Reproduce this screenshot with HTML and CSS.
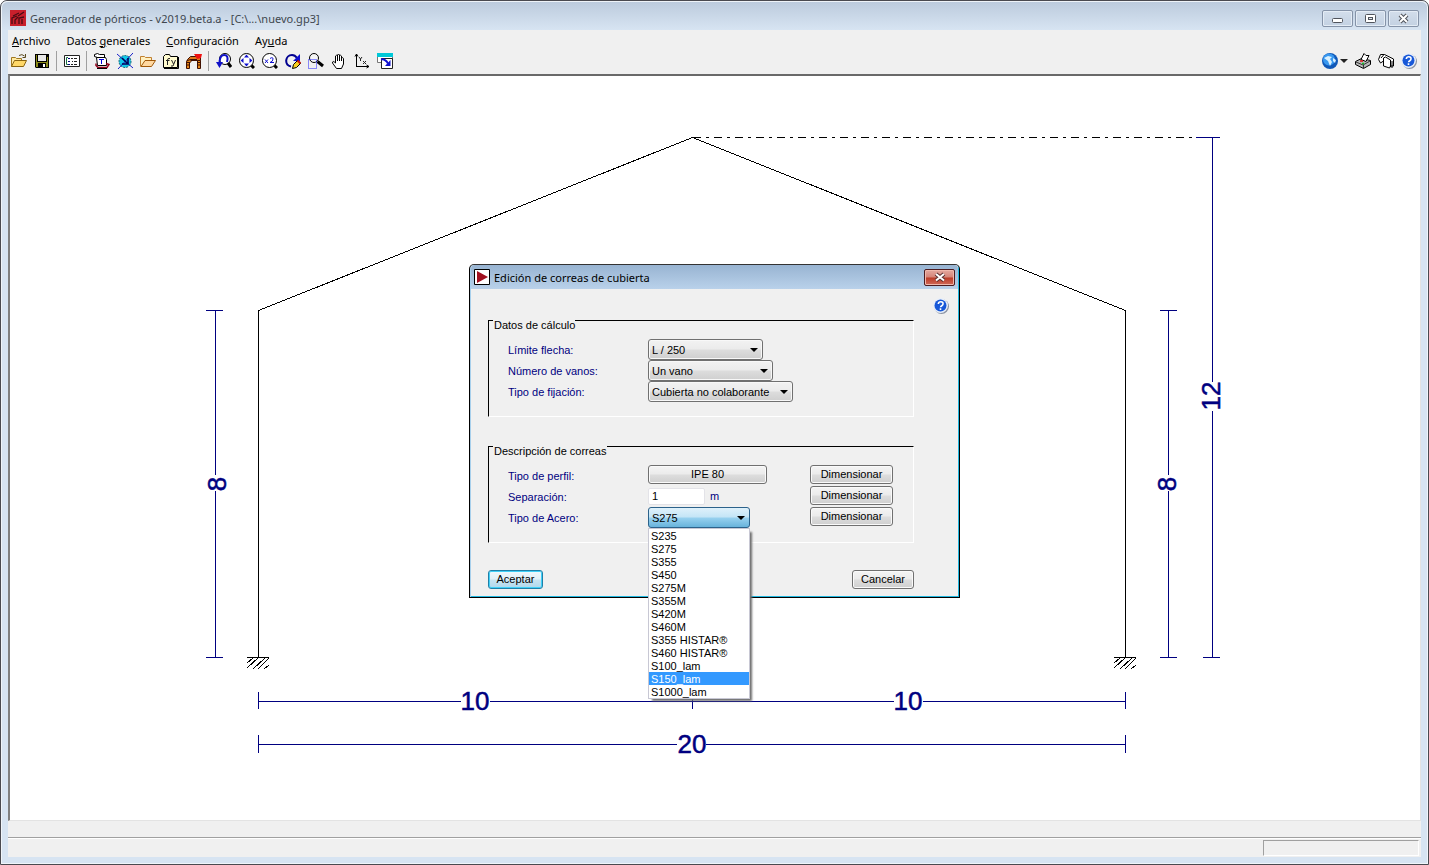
FILE: index.html
```html
<!DOCTYPE html>
<html lang="es">
<head>
<meta charset="utf-8">
<title>Generador de pórticos</title>
<link rel="stylesheet" href="styles.css">
</head>
<body>
<div class="window">
  <header class="titlebar">
    <svg class="app-icon" viewBox="0 0 16 16"><rect width="16" height="16" fill="#c8202c"/><path d="M2 14V8l5-2M5 14V10l3-3M9 14V8l5-1M12 14V9M3 6l6-3M8 6l6-4" fill="none" stroke="#4a0c14" stroke-width="1.3"/></svg>
    <h1 class="title">Generador de pórticos - v2019.beta.a - [C:\...\nuevo.gp3]</h1>
    <div class="win-buttons">
      <button class="win-btn" aria-label="Minimizar"><svg viewBox="0 0 12 12"><rect x="0.500" y="5.500" width="10" height="4" rx="1" fill="#fff" stroke="#50545c"/></svg></button>
      <button class="win-btn" aria-label="Maximizar"><svg viewBox="0 0 12 12"><rect x="0.500" y="1.500" width="10" height="8" rx="1" fill="#fff" stroke="#50545c"/><rect x="3.500" y="4.500" width="4" height="2" fill="#dfe6ee" stroke="#50545c"/></svg></button>
      <button class="win-btn" aria-label="Cerrar"><svg viewBox="0 0 12 12"><path d="M2 2l7 7M9 2l-7 7" stroke="#50545c" stroke-width="4"/><path d="M2 2l7 7M9 2l-7 7" stroke="#fff" stroke-width="2"/></svg></button>
    </div>
  </header>
  <div class="client">
    <nav class="menubar">
      <a href="#archivo"><u>A</u>rchivo</a>
      <a href="#datos">Datos <u>g</u>enerales</a>
      <a href="#config"><u>C</u>onfiguración</a>
      <a href="#ayuda">Ay<u>u</u>da</a>
    </nav>
    <div class="toolbar">
      <button class="tool" aria-label="Abrir"><svg viewBox="0 0 16 16"><path d="M.500 13.500V4.500h4l1 1h5v2" fill="#ffe9a0" stroke="#a07820"/><path d="M.500 13.500l3-6h12l-3 6z" fill="#ffd868" stroke="#8a6410"/><path d="M8 2.500q3-2 5.500.500M14.500 1v3.500h-3" fill="none" stroke="#5a4a20"/></svg></button>
      <button class="tool" aria-label="Guardar"><svg viewBox="0 0 16 16"><path d="M1 1h14v14H2l-1-1z" fill="#000"/><path d="M2 2h1v7h10V4h1v10H2z" fill="#8a8a18"/><path d="M4 2h8v6H4z" fill="#e8e8e8"/><path d="M4 10h8v5H4z" fill="#000"/><path d="M9 11h2v3H9z" fill="#fff"/></svg></button>
      <span class="sep"></span>
      <button class="tool" aria-label="Datos de la obra"><svg viewBox="0 0 16 16"><path d="M.500 2.500h15v11H.500z" fill="#fff" stroke="#222"/><path d="M4 4.500H2.500v7H4" fill="none" stroke="#187040"/><path d="M4 5.500h2M4 8.500h2M4 11.500h2" stroke="#000080"/><path d="M7 5.500h2m1 0h3M8 8.500h1m1 0h3M7 11.500h2m1 0h3" stroke="#222"/></svg></button>
      <span class="sep"></span>
      <button class="tool" aria-label="Perfiles"><svg viewBox="0 0 16 16"><path d="M.500 1.500l3-1 2 1h5v3h-7l-3-1z" fill="#fff" stroke="#000"/><path d="M2.500 4.500h9l1 2v6h-9z" fill="#fff" stroke="#000"/><path d="M5 6.500h5M7.500 6v5" stroke="#0000e0"/><path d="M2 10.500v2l2 2h9l2-3-3-1" fill="none" stroke="#900018" stroke-width="1.500"/><path d="M3 15.500h10" stroke="#000"/></svg></button>
      <button class="tool" aria-label="Nudos"><svg viewBox="0 0 16 16"><circle cx="8" cy="8.500" r="6" fill="#10c8e8" stroke="#106070" stroke-dasharray="2 1"/><path d="M0 1l16 14M16 0L1 16" stroke="#1820c8"/><path d="M5 5l5 5M11 5v6H5" fill="none" stroke="#000058" stroke-width="1.600"/></svg></button>
      <button class="tool" aria-label="Abrir biblioteca"><svg viewBox="0 0 16 16"><path d="M.500 13.500V3.500h4l1 1h6v3" fill="#fff0c0" stroke="#c08030"/><path d="M1 13.500l4-6h10.500l-4 6z" fill="#ffd8a0" stroke="#a05808"/></svg></button>
      <button class="tool" aria-label="Límite elástico"><svg viewBox="0 0 16 16"><path d="M.500 14.500v-11l2-2h4l1 2h7v11z" fill="#fffbd0" stroke="#000"/><path d="M15.500 4v11.500H1" fill="none" stroke="#000"/><path d="M4.500 12V7q0-2 2.500-1.500M3 7.500h3.500M8.500 7l2 4M12.500 7L10 13H8" fill="none" stroke="#222"/></svg></button>
      <button class="tool" aria-label="Pórtico"><svg viewBox="0 0 16 16"><path d="M1.500 6.500l3-3h7l3 1v3H1z" fill="#e07818" stroke="#401000"/><path d="M8 1h8l-1 4-4 1z" fill="#f01010"/><path d="M1 7.500l4-1v2L3.500 10v5.500h-3V9zM11.500 7.500h3v8h-3z" fill="#e88818" stroke="#401000"/><path d="M5 6.500h6M1 12h3m7 0h4M1 9.500h3m7 0h4" stroke="#401000"/></svg></button>
      <span class="sep"></span>
      <button class="tool" aria-label="Vista previa"><svg viewBox="0 0 16 16"><circle cx="9" cy="6" r="5.500" fill="#fff" stroke="#000"/><path d="M12 10l3 4" stroke="#000" stroke-width="3"/><path d="M11 9Q13 2 8 2 3.500 2 3.500 11" fill="none" stroke="#1010c8" stroke-width="2"/><path d="M0 9h7l-3.500 6z" fill="#1010c8"/></svg></button>
      <button class="tool" aria-label="Ver todo"><svg viewBox="0 0 16 16"><path d="M12 12l3 3" stroke="#000" stroke-width="3"/><circle cx="7.500" cy="7.500" r="7" fill="#fff" stroke="#000"/><path d="M7.500 1.500L10 4.500H5zM7.500 13.500L5 10.500h5zM1.500 7.500l3-2.500v5zM13.500 7.500l-3-2.500v5z" fill="#1010d0"/></svg></button>
      <button class="tool" aria-label="Zoom doble"><svg viewBox="0 0 16 16"><path d="M12 12l3 3" stroke="#000" stroke-width="3"/><circle cx="7.500" cy="7.500" r="7" fill="#fff" stroke="#000"/><path d="M3 6.500l3 3.500M6 6.500L3 10M8 5.500q3-2 3 .500T8 9.500h4" fill="none" stroke="#1010d0"/></svg></button>
      <button class="tool" aria-label="Redibujar"><svg viewBox="0 0 16 16"><path d="M6 13.500C-1 12 0 2 7 2q3 0 5 3" fill="none" stroke="#000090" stroke-width="2"/><path d="M15 1v7H8z" fill="#1010d0"/><path d="M7.500 15.500l1-4 4-4 3 3-4 4z" fill="#f8d020" stroke="#000"/><path d="M12.500 7.500l3 3" stroke="#c01010" stroke-width="2"/></svg></button>
      <button class="tool" aria-label="Zoom ventana"><svg viewBox="0 0 16 16"><circle cx="6" cy="5" r="4.500" fill="#f4f4f4" stroke="#000"/><path d="M9.500 8.500l5.500 4.500" stroke="#000" stroke-width="3"/><path d="M.500 6.500h8v9h-8z" fill="none" stroke="#2020ff" stroke-dasharray="1 1"/></svg></button>
      <button class="tool" aria-label="Mover"><svg viewBox="0 0 16 16"><path d="M5.500 15.500L1.500 10q0-3 3 0V3q1-1.500 2 0V2q1-2 2 0v1q1-1.500 2 0v2q1.500-1 2 .500V11l-2 4.500z" fill="#fff" stroke="#000"/><path d="M6.500 3v5m2-5v5m2-4v4" stroke="#000"/></svg></button>
      <button class="tool" aria-label="Ejes"><svg viewBox="0 0 16 16"><path d="M2.500 14V1M1 3.500L2.500 1 4 3.500M2 13.500h13M12.500 12l2.500 1.500-2.500 1.500" fill="none" stroke="#000"/><path d="M5 4l1.500 2L8 4M6.500 6v2M9 8l3 3M12 8l-3 3" fill="none" stroke="#222"/></svg></button>
      <button class="tool" aria-label="Ventana"><svg viewBox="0 0 16 16"><path d="M.500.500h15v9H.500z" fill="#fff" stroke="#777"/><path d="M0 0h16v4H0z" fill="#00c8d8"/><path d="M4.500 5.500h11v10h-11z" fill="#fff" stroke="#222"/><path d="M4 6.500q4-1 7 4" fill="none" stroke="#1010d0" stroke-width="2"/><path d="M13.500 7v6H8z" fill="#1010d0"/></svg></button>
      <span class="spacer"></span>
      <button class="tool drop" aria-label="Web"><svg viewBox="0 0 16 16"><circle cx="8" cy="8" r="8" fill="#1058b8"/><circle cx="7" cy="6.500" r="6" fill="#3898f0"/><path d="M2 5l4-2 4 1-2 2 2 3-2 4-2-5zM11 5l3 2-1 3-2-2z" fill="#d8f0ff"/></svg><i class="caret"></i></button>
      <button class="tool" aria-label="Imprimir"><svg viewBox="0 0 16 16"><path d="M.500 8.500l6-3 9 2v4l-7 4-8-4z" fill="#b8b8b8" stroke="#000"/><path d="M6 6.500l3-6 2 2 3 0-3 6z" fill="#fff" stroke="#000"/><path d="M1 9l7 3 7-4M8.500 12v3" fill="none" stroke="#333"/><path d="M5 8h3" stroke="#e01010" stroke-width="1.500"/><path d="M7 10.500h2" stroke="#10c020" stroke-width="1.500"/></svg></button>
      <button class="tool" aria-label="Listados"><svg viewBox="0 0 16 16"><path d="M.500 6.500l2-5h4l9 4.500v7h-3l-1 2-6-2v-5l-3 2z" fill="#fff" stroke="#000"/><path d="M5.500 8V5l2-1 5 3v7M3 5l3-3.500M14 8v7" fill="none" stroke="#000"/></svg></button>
      <button class="tool" aria-label="Ayuda"><svg viewBox="0 0 16 16"><circle cx="8.500" cy="8.500" r="7.500" fill="#8c94a4"/><circle cx="7.500" cy="7.500" r="7.500" fill="#e8eef8"/><circle cx="7.500" cy="7.500" r="6" fill="#1858d8"/><path d="M5.300 6q.200-2.200 2.600-2.200T10 6q0 1-1.200 1.700T7.600 9.300M7.500 10.300v1.700" fill="none" stroke="#fff" stroke-width="1.600"/></svg></button>
    </div>
    <main class="canvas">
      <svg class="drawing" viewBox="0 0 1410 744" preserveAspectRatio="xMinYMin" role="img" aria-label="Pórtico a dos aguas">
        <g transform="translate(-10 -76)">
          <g class="frame-lines">
            <path d="M258.500 657V310.500L692.500 137.500 1125.500 310.500V657"/>
            <path d="M692.500 137.500H1204" stroke-dasharray="8 5 3 5"/>
            <path d="M247 657.500h22M247 663l6-5M247 668l11-10M253 669l12-11M258 669l11-11M264 669l5-4"/>
            <path d="M1114 657.500h22M1114 663l6-5M1114 668l11-10M1120 669l12-11M1125 669l11-11M1131 669l5-4"/>
          </g>
          <g class="dims">
            <path d="M206 310.500h17M206 657.500h17M215.500 310V475M215.500 491V657"/>
            <path d="M1160 310.500h17M1160 657.500h17M1168.500 310V475M1168.500 491V657"/>
            <path d="M1196 137.500h24M1203 657.500h17M1212.500 137V382M1212.500 411V657"/>
            <path d="M258.500 692v17M692.500 692v17M1125.500 692v17M258 701.500H461M490 701.500H894M923 701.500h202"/>
            <path d="M258.500 735v18M1125.500 735v18M258 744.500H677M706 744.500h419"/>
          </g>
          <g class="dim-text">
            <text x="475" y="710">10</text>
            <text x="908" y="710">10</text>
            <text x="692" y="753">20</text>
            <text transform="translate(226 484) rotate(-90)">8</text>
            <text transform="translate(1176 484) rotate(-90)">8</text>
            <text transform="translate(1220 396) rotate(-90)">12</text>
          </g>
        </g>
      </svg>
    </main>
    <div class="message"></div>
    <footer class="status"><div class="status-cell"></div></footer>
  </div>

  <div class="layer">
    <section class="dialog" role="dialog" aria-labelledby="dlg-title">
      <header class="dialog-title">
        <svg class="dialog-icon" viewBox="0 0 16 16"><path d="M.500.500h15v15H.500z" fill="#fff" stroke="#000"/><path d="M3 2l11 6-11 6z" fill="#a01020"/></svg>
        <h2 id="dlg-title" class="title">Edición de correas de cubierta</h2>
        <button class="dialog-close" aria-label="Cerrar"><svg viewBox="0 0 12 12"><path d="M2 3l8 6.500M10 3L2 9.500" stroke="#5a3030" stroke-width="4"/><path d="M2 3l8 6.500M10 3L2 9.500" stroke="#fff" stroke-width="2"/></svg></button>
      </header>
      <div class="dialog-body">
        <form class="form">
          <fieldset class="group">
            <legend>Datos de cálculo</legend>
            <div class="row"><label for="flecha">Límite flecha:</label>
              <span class="combo w115"><select id="flecha"><option>L / 250</option></select></span></div>
            <div class="row"><label for="vanos">Número de vanos:</label>
              <span class="combo w125"><select id="vanos"><option>Un vano</option></select></span></div>
            <div class="row"><label for="fijacion">Tipo de fijación:</label>
              <span class="combo w145"><select id="fijacion"><option>Cubierta no colaborante</option></select></span></div>
          </fieldset>
          <fieldset class="group">
            <legend>Descripción de correas</legend>
            <div class="row"><label for="perfil">Tipo de perfil:</label>
              <button type="button" id="perfil" class="btn profile">IPE 80</button>
              <button type="button" class="btn">Dimensionar</button></div>
            <div class="row"><label for="separacion">Separación:</label>
              <span class="measure"><input id="separacion" type="text" value="1"><span>m</span></span>
              <button type="button" class="btn">Dimensionar</button></div>
            <div class="row"><label for="acero">Tipo de Acero:</label>
              <span class="combo open w102"><select id="acero"><option>S275</option></select>
                <ul class="list" role="listbox" aria-label="Tipo de Acero">
                  <li role="option">S235</li><li role="option">S275</li><li role="option">S355</li><li role="option">S450</li><li role="option">S275M</li><li role="option">S355M</li><li role="option">S420M</li><li role="option">S460M</li><li role="option">S355 HISTAR®</li><li role="option">S460 HISTAR®</li><li role="option">S100_lam</li><li role="option" aria-selected="true" class="active">S150_lam</li><li role="option">S1000_lam</li>
                </ul></span>
              <button type="button" class="btn">Dimensionar</button></div>
          </fieldset>
          <div class="actions">
            <button type="button" class="btn default">Aceptar</button>
            <button type="button" class="btn cancel">Cancelar</button>
          </div>
        </form>
        <button class="help" aria-label="Ayuda"><svg viewBox="0 0 16 16"><circle cx="8.500" cy="8.500" r="7.500" fill="#8c94a4"/><circle cx="7.500" cy="7.500" r="7.500" fill="#e8eef8"/><circle cx="7.500" cy="7.500" r="6" fill="#1858d8"/><path d="M5.300 6q.200-2.200 2.600-2.200T10 6q0 1-1.200 1.700T7.600 9.300M7.500 10.300v1.700" fill="none" stroke="#fff" stroke-width="1.600"/></svg></button>
      </div>
    </section>
  </div>
</div>
</body>
</html>
```
FILE: styles.css
```css
* { box-sizing: border-box; }
body { margin: 0; background: #fff; font-family: "Liberation Sans", Arial, sans-serif; font-size: 11px; color: #000; }
button { font: inherit; color: inherit; padding: 0; border: 0; background: none; }
svg { display: block; }

.window { position: relative; height: 100vh; display: flex; flex-direction: column; padding: 0 7px 7px; border: 1px solid #4a4a50; border-radius: 7px 7px 0 0; background: #d7e4f2; box-shadow: inset 0 0 0 1px #f0f5fa; }
.titlebar { height: 29px; margin: 0 -6px; padding: 4px 8px 0; display: flex; align-items: center; gap: 4px; border-radius: 6px 6px 0 0; background: linear-gradient(#bccbdd, #d7e4f2); border-top: 1px solid #eef3f8; }
.app-icon, .dialog-icon { width: 16px; height: 16px; flex: none; }
.title { margin: 0; flex: 1; font: 11px "Noto Sans", "Open Sans", sans-serif; white-space: nowrap; }
.titlebar .title { color: #40474f; }
.titlebar .win-buttons { display: flex; gap: 2px; align-self: flex-start; padding-top: 4px; }
.win-btn { width: 31px; height: 17px; display: grid; place-items: center; border: 1px solid #8593a8; border-radius: 2px; background: linear-gradient(#d3deeb, #c3d1e2); box-shadow: inset 0 0 0 1px #e4ecf5; }
.win-btn svg, .dialog-close svg { width: 12px; height: 12px; }

.client { flex: 1; min-height: 0; display: flex; flex-direction: column; background: #f0f0f0; }
.menubar { height: 20px; display: flex; align-items: center; gap: 16px; padding-left: 4px; font: 11px "Noto Sans", "Open Sans", sans-serif; }
.menubar a { color: #000; text-decoration: none; }
.toolbar { height: 22px; margin: 0 0 1px -1px; padding-right: 1px; display: flex; align-items: center; }
.tool { width: 23px; height: 22px; flex: none; display: flex; align-items: center; justify-content: center; }
.tool svg, .help svg { width: 16px; height: 16px; }
.drop { width: 32px; gap: 2px; }
.caret { border: solid transparent; border-width: 4px 4px 0; border-top-color: #222; }
.sep { width: 1px; height: 20px; margin: 0 3px; background: #a0a0a0; }
.spacer { flex: 1; }

.canvas { flex: 1; min-height: 0; margin: 1px 0 1px; background: #fff; border: 2px solid #e3e3e3; border-width: 2px 1px 1px 2px; border-top-color: #696969; border-left-color: #808080; }
.drawing { width: 100%; height: 100%; }
.frame-lines { fill: none; stroke: #000; shape-rendering: crispEdges; }
.dims { fill: none; stroke: #000080; shape-rendering: crispEdges; }
.dim-text { fill: #000080; stroke: #000080; stroke-width: 0.5; font-size: 26px; text-anchor: middle; }
.message { height: 16px; border-bottom: 1px solid #a0a0a0; }
.status { height: 19px; display: flex; justify-content: flex-end; padding: 1px 2px 1px 0; border-top: 1px solid #fff; }
.status-cell { width: 156px; border: 1px solid #fff; border-top-color: #a0a0a0; border-left-color: #a0a0a0; }

.layer { position: absolute; inset: 0; display: grid; place-items: center; padding-bottom: 3px; }
.dialog { width: 491px; border: 1px solid #000; border-top-color: #333; border-radius: 5px 5px 0 0; background: #f0f0f0; box-shadow: inset 1px 0 #a8d0ec, inset -1px -1px #20b8e0; }
.dialog-title { height: 24px; display: flex; align-items: center; gap: 4px; padding: 0 3px; margin: 0 1px; border-radius: 4px 4px 0 0; background: linear-gradient(#98b4d2, #b9d1ea); }
.dialog-close { width: 31px; height: 17px; display: grid; place-items: center; border: 1px solid #4c1c20; border-radius: 2px; background: linear-gradient(#e4a9a0 0%, #d58478 48%, #bb3b27 52%, #d06a58 100%); box-shadow: inset 0 0 0 1px #f0b8ac; }
.dialog-body { display: flex; align-items: flex-start; gap: 19px; padding: 9px 10px 8px 18px; }
.form { flex: 1; min-width: 0; padding-top: 11px; }
.help { flex: none; }
.group { min-width: 0; margin: 0 0 18px; padding: 8px 0 14px 19px; border: 1px solid #fff; border-top-color: #000; border-left-color: #000; }
.group legend { margin-left: -15px; padding: 10px 0 0 1px; line-height: 12px; }
.row { display: grid; grid-template-columns: 140px 162px 83px; height: 21px; align-items: start; line-height: 21px; }
.row label, .measure span { color: #000080; }
.row label { line-height: 23px; }
.combo { position: relative; display: block; height: 21px; }
.combo select { appearance: none; width: 100%; height: 21px; display: block; padding: 0 18px 0 3px; border: 1px solid #707070; border-radius: 3px; background: linear-gradient(#f2f2f2 0%, #ebebeb 48%, #dddddd 52%, #cfcfcf 100%); box-shadow: inset 0 0 0 1px #f8f8f8; font: inherit; color: #000; }
.combo::after { content: ""; position: absolute; right: 5px; top: 9px; border: solid transparent; border-width: 4px 4px 0; border-top-color: #000; }
.open select { border-color: #2c628b; background: linear-gradient(#dff1fb 0%, #c4e5f6 48%, #98d1ef 52%, #68b3db 100%); box-shadow: none; }
.w115 { width: 115px; }
.w125 { width: 125px; }
.w145 { width: 145px; }
.w102 { width: 102px; }
.list { position: absolute; z-index: 2; top: 21px; left: 0; width: 102px; margin: 0; padding: 0; list-style: none; line-height: 15px; background: #fff; border: 1px solid #c8c8d4; box-shadow: 3px 3px 2px -1px #707070; }
.list li { padding-left: 2px; height: 13px; white-space: nowrap; }
.list .active { background: #3399ff; color: #fff; }
.btn { height: 19px; line-height: 17px; border: 1px solid #707070; border-radius: 3px; background: linear-gradient(#f4f4f4 0%, #ebebeb 48%, #dddddd 52%, #cfcfcf 100%); box-shadow: inset 0 0 0 1px #fafafa; }
.profile { width: 119px; }
.measure { display: flex; align-items: center; gap: 5px; height: 21px; }
.measure input { width: 57px; height: 17px; padding: 0 3px; border: 1px solid #e3e3e8; border-radius: 2px; background: #fff; font: inherit; }
.actions { display: flex; justify-content: space-between; padding-top: 9px; }
.default { width: 55px; border-color: #2080a8; background: linear-gradient(#f0f8fc 0%, #e0f0f8 48%, #c8e4f2 52%, #b0d8ec 100%); box-shadow: inset 0 0 0 1px #40d0f8; }
.cancel { width: 62px; }
```
